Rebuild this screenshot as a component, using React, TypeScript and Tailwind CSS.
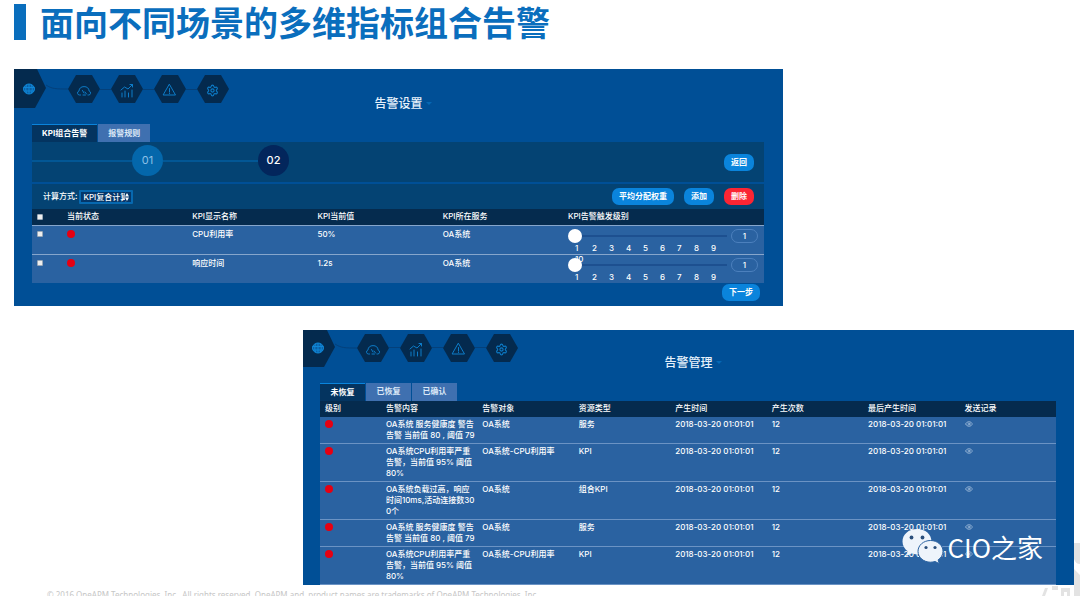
import type { ReactNode } from 'react'
import { Eye, Settings } from 'lucide-react'

type Kpi = {
  name: string,
  value: string,
  service: string,
  levels: number[],
}

type Alarm = {
  content: string,
  target: string,
  type: string,
}

const kpis: Kpi[] = [
  { name: 'CPU利用率', value: '50%', service: 'OA系统', levels: [1, 2, 3, 4, 5, 6, 7, 8, 9, 10] },
  { name: '响应时间', value: '1.2s', service: 'OA系统', levels: [1, 2, 3, 4, 5, 6, 7, 8, 9] },
]

const alarms: Alarm[] = [
  { content: 'OA系统 服务健康度 警告\n告警 当前值 80 , 阈值 79', target: 'OA系统', type: '服务' },
  { content: 'OA系统CPU利用率严重\n告警，当前值 95% 阈值\n80%', target: 'OA系统-CPU利用率', type: 'KPI' },
  { content: 'OA系统负载过高，响应\n时间10ms,活动连接数30\n0个', target: 'OA系统', type: '组合KPI' },
  { content: 'OA系统 服务健康度 警告\n告警 当前值 80 , 阈值 79', target: 'OA系统', type: '服务' },
  { content: 'OA系统CPU利用率严重\n告警，当前值 95% 阈值\n80%', target: 'OA系统-CPU利用率', type: 'KPI' },
]

const kpiHeads = ['当前状态', 'KPI显示名称', 'KPI当前值', 'KPI所在服务']
const alarmHeads = ['级别', '告警内容', '告警对象', '资源类型', '产生时间', '产生次数', '最后产生时间', '发送记录']

const HexLink = ({ label, children }: { label: string, children: ReactNode }) => (
  <a href="#" aria-label={label} className="shrink-0">
    <svg viewBox="0 0 32 28" className="w-8 h-7" fill="none" stroke="#0d7cc8" strokeWidth="1" strokeLinecap="round" strokeLinejoin="round">
      <path d="M8 0h16l8 14-8 14H8L0 14z" fill="#042a4e" stroke="none" />
      {children}
    </svg>
  </a>
)

const Line = () => <span className="w-[11px] h-px bg-[#04407a]" />

const Nav = () => (
  <nav className="flex items-start">
    <a href="#" aria-label="首页">
      <svg viewBox="0 0 32 39" className="w-8 h-[39px]" fill="none" stroke="#0f86d6" strokeWidth="1">
        <path d="M0 0h23l9 19-11 20H0z" fill="#042a4e" stroke="none" />
        <ellipse cx="15" cy="20" rx="5.5" ry="5" fill="#0b5fa5" />
        <path d="M9.5 18.5h11M10 22h10M15 15v10M12.5 16c-1 3-1 5 0 8M17.5 16c1 3 1 5 0 8" />
      </svg>
    </a>
    <svg viewBox="0 0 22 28" className="w-[22px] h-7 mt-1.5" fill="none" stroke="#04407a">
      <path d="M0 10c6 4 10 4 22 4" />
    </svg>
    <div className="flex items-center mt-1.5">
      <HexLink label="仪表盘">
        <path d="M12.500 20h-1a2 2 0 0 1-.6-3.900 5.200 5.200 0 0 1 10.300 0 2 2 0 0 1-.6 3.900H20" />
        <path d="M14.500 15.500l1.500 2.500M15 20h2.500M17 17l1.500 2" />
      </HexLink>
      <Line />
      <HexLink label="趋势">
        <path d="M11 22v-4M14 22v-6M17.500 22v-4M21 22v-7M10 15l3.500-3 3.500 2 4.500-4.500M19 9.500h2.500V12" />
      </HexLink>
      <Line />
      <HexLink label="告警">
        <path d="M15.500 9.500l6 10.500h-12zM15.500 13.500v3.500M15.500 18.200v.3" />
      </HexLink>
      <Line />
      <HexLink label="设置">
        <Settings x="9" y="9" width="13" height="13" strokeWidth="2" color="#0d7cc8" />
      </HexLink>
    </div>
  </nav>
)

const PanelHeader = ({ title }: { title: string }) => (
  <header className="grid grid-cols-[1fr_auto_1fr] h-[55px]">
    <Nav />
    <h2 className="relative self-end pb-3 text-xs leading-4 font-medium text-[#e6f1fb]">
      {title}
      <span className="absolute left-full top-1.5 ml-1 border-x-[3px] border-x-transparent border-t-[3px] border-t-[#0668b4]" />
    </h2>
  </header>
)

const Tabs = ({ items }: { items: string[] }) => (
  <div role="tablist" className="flex gap-px h-[18px]">
    {items.map((item, index) => (
      <button
        key={item}
        role="tab"
        aria-selected={index === 0}
        className={index === 0
          ? 'min-w-[45px] px-2.5 border-t border-[#0a84dc] bg-[#043460] font-bold'
          : 'min-w-[45px] px-2.5 bg-[#3f70b0] font-bold text-[#dbe8f7]'}
      >
        {item}
      </button>
    ))}
  </div>
)

const Pill = ({ danger, children }: { danger?: boolean, children: ReactNode }) => (
  <button className={danger
    ? 'h-[17px] px-[7px] rounded-[7px] bg-[#fb2533] font-bold'
    : 'h-[17px] px-[7px] rounded-[7px] bg-[#0a84dc] font-bold'}
  >
    {children}
  </button>
)

const Dot = () => <span className="block w-2 h-2 rounded-full bg-[#e60012]" />

const Check = ({ label }: { label: string }) => (
  <input type="checkbox" aria-label={label} className="block w-1.5 h-1.5 appearance-none rounded-[1px] border border-[#9aa9b8] bg-[#eeeeee] checked:bg-[#0a84dc]" />
)

const AlarmSetting = () => (
  <section className="w-[71.2%] ml-3.5 pb-[5px] bg-[#004f96]">
    <PanelHeader title="告警设置" />
    <div className="pl-[18px] pr-[19px]">
      <Tabs items={['KPI组合告警', '报警规则']} />

      <div className="flex items-center justify-between h-10 pr-2.5 bg-[#044373]">
        <ol className="flex items-center self-start mt-[3px] text-[11px] text-white">
          <li className="flex items-center">
            <span className="w-[100px] h-0.5 bg-[#035795]" />
            <span className="flex items-center justify-center w-[31px] h-[31px] rounded-full bg-[#0467ab] text-[#8cc0e6]">01</span>
          </li>
          <li className="flex items-center">
            <span className="w-[95px] h-0.5 bg-[#035795]" />
            <span className="flex items-center justify-center w-[31px] h-[31px] rounded-full bg-[#03265c] font-medium">02</span>
          </li>
        </ol>
        <Pill>返回</Pill>
      </div>

      <div className="flex items-center justify-between h-[25px] mt-0.5 pl-[11px] pr-2.5 bg-[#044373]">
        <div className="flex items-center gap-0.5">
          <label htmlFor="calc" className="font-medium">计算方式:</label>
          <div className="relative">
            <select id="calc" className="block w-[54px] h-[14px] pl-0.5 appearance-none rounded-[1px] border-2 border-[#0768af] bg-[#04376a] font-medium">
              <option>KPI复合计算</option>
            </select>
            <svg viewBox="0 0 4 8" className="absolute right-1 top-[3px] w-1 h-2 bg-[#04376a]" fill="#ffffff">
              <path d="M0 3.500L2 0l2 3.500zM0 4.500L2 8l2-3.500z" />
            </svg>
          </div>
        </div>
        <div className="flex gap-2.5">
          <Pill>平均分配权重</Pill>
          <Pill>添加</Pill>
          <Pill danger>删除</Pill>
        </div>
      </div>

      <table className="w-full table-fixed text-left font-medium">
        <thead className="bg-[#052b4e]">
          <tr className="h-4">
            <th className="w-[35px] pl-[5px]"><Check label="全选" /></th>
            {kpiHeads.map((head) => (
              <th key={head} className="font-medium">{head}</th>
            ))}
            <th className="w-[196px] font-medium">KPI告警触发级别</th>
          </tr>
        </thead>
        <tbody className="bg-[#2a62a1]">
          {kpis.map((kpi) => (
            <tr key={kpi.name} className="border-t border-[#86a6cc] align-top">
              <td className="pl-[5px] pt-[5px]"><Check label={kpi.name} /></td>
              <td className="pt-1"><Dot /></td>
              <td className="pt-[3px]">{kpi.name}</td>
              <td className="pt-[3px]">{kpi.value}</td>
              <td className="pt-[3px]">{kpi.service}</td>
              <td>
                <div className="flex h-7 pt-[3px] pr-1.5 gap-1">
                  <div className="flex-1">
                    <input
                      type="range"
                      aria-label={`${kpi.name} 告警触发级别`}
                      min={1}
                      max={10}
                      defaultValue={1}
                      className="block w-full h-[14px] appearance-none bg-transparent [&::-webkit-slider-runnable-track]:h-0.5 [&::-webkit-slider-runnable-track]:bg-[#1d5090] [&::-webkit-slider-thumb]:appearance-none [&::-webkit-slider-thumb]:w-[14px] [&::-webkit-slider-thumb]:h-[14px] [&::-webkit-slider-thumb]:-mt-1.5 [&::-webkit-slider-thumb]:rounded-full [&::-webkit-slider-thumb]:bg-white"
                    />
                    <div className="flex flex-wrap w-[154px]">
                      {kpi.levels.map((level) => (
                        <span key={level} className="w-[17px] pl-[7px]">{level}</span>
                      ))}
                    </div>
                  </div>
                  <input type="text" aria-label={`${kpi.name} 级别`} defaultValue="1" className="w-[27px] h-[14px] rounded-full border border-[#4c80bd] bg-transparent text-center" />
                </div>
              </td>
            </tr>
          ))}
        </tbody>
      </table>

      <div className="flex justify-end pt-px pr-1">
        <Pill>下一步</Pill>
      </div>
    </div>
  </section>
)

const AlarmManage = () => (
  <section className="relative w-[71.4%] mt-6 ml-auto mr-1.5 overflow-hidden bg-[#004f96]">
    <div className="-mt-0.5">
      <PanelHeader title="告警管理" />
    </div>
    <div className="pl-[17px] pr-[18px]">
      <Tabs items={['未恢复', '已恢复', '已确认']} />
      <table className="w-full table-fixed text-left font-medium">
        <thead className="bg-[#052b4e]">
          <tr className="h-4">
            {alarmHeads.map((head) => (
              <th key={head} className="pl-[5px] font-medium whitespace-nowrap first:w-[61px]">{head}</th>
            ))}
          </tr>
        </thead>
        <tbody className="bg-[#2a62a1]">
          {alarms.map((alarm, index) => (
            <tr key={index} className="border-b border-[#6b93c4] align-top">
              <td className="pl-[5px] pt-[3px]"><Dot /></td>
              <td className="pl-[5px] py-0.5 whitespace-pre">{alarm.content}</td>
              <td className="pl-[5px] py-0.5 whitespace-nowrap">{alarm.target}</td>
              <td className="pl-[5px] py-0.5">{alarm.type}</td>
              <td className="pl-[5px] py-0.5 whitespace-nowrap">2018-03-20 01:01:01</td>
              <td className="pl-[5px] py-0.5">12</td>
              <td className="pl-[5px] py-0.5 whitespace-nowrap">2018-03-20 01:01:01</td>
              <td className="pl-[5px] pt-[3px]">
                <a href="#" aria-label="查看发送记录"><Eye className="w-2 h-2 text-[#b7cde6]" /></a>
              </td>
            </tr>
          ))}
        </tbody>
      </table>
    </div>

    <div className="absolute right-[31px] bottom-5 flex items-center gap-1 text-white">
      <svg viewBox="0 0 42 35" className="w-[42px] h-[35px]">
        <path d="M15 0C6.500 0 .5 5.500.5 12.500c0 4 2 7.500 5.500 10L4.500 27l5-2.500c2 .6 3.500.8 5.500.8 8.500 0 14.500-5.800 14.500-12.800S23.500 0 15 0z" fill="#eef4fb" />
        <path d="M28.500 11.500c-7 0-12.500 4.800-12.500 10.800s5.500 10.900 12.500 10.900c1.700 0 3.200-.3 4.600-.7l4.200 2.200-1.200-3.800c3.100-2 4.900-5.100 4.900-8.600 0-6-5.500-10.800-12.500-10.800z" fill="#eef4fb" stroke="#2a62a1" />
        <g fill="#2a4f7c">
          <circle cx="9.500" cy="8.500" r="1.900" />
          <circle cx="20.500" cy="8.500" r="1.900" />
          <circle cx="24" cy="18.500" r="1.600" />
          <circle cx="33" cy="18.500" r="1.600" />
        </g>
      </svg>
      <span className="text-[26px] leading-9 font-normal font-['Noto_Sans_CJK_SC',sans-serif]">CIO之家</span>
    </div>
  </section>
)

const App = () => {
  return (
    <main lang="zh-CN" className="relative h-screen overflow-hidden pt-1 bg-white text-white text-[8px] leading-[11px] font-['Inter','Noto_Sans_CJK_SC',sans-serif]">
      <svg viewBox="0 0 40 53" className="absolute right-0 bottom-0 w-10 h-[53px]" fill="#e3e3e3">
        <path d="M34 0h6v21c-3 0-5-2-6-5zM34 26l6 6v21h-6zM2 53l3-8h3l-3 8zM12 43h6v4h-6zM21 45h9v8h-3v-4h-3v4h-3z" />
      </svg>

      <h1 className="flex items-center gap-3.5 h-9 mb-[29px] ml-3.5 text-[34px] leading-9 font-bold text-[#0a6ebd] whitespace-nowrap font-['Noto_Sans_CJK_SC',sans-serif]">
        <span className="w-3 h-9 bg-[#0a6ebd]" />
        面向不同场景的多维指标组合告警
      </h1>

      <AlarmSetting />
      <AlarmManage />

      <footer className="mt-1 ml-[47px] text-[#c6c6c6] whitespace-nowrap font-['Noto_Sans',sans-serif]">
        © 2016 OneAPM Technologies, Inc.&nbsp; All rights reserved. OneAPM and&nbsp; product names are trademarks of OneAPM Technologies, Inc.
      </footer>
    </main>
  )
}

export default App
